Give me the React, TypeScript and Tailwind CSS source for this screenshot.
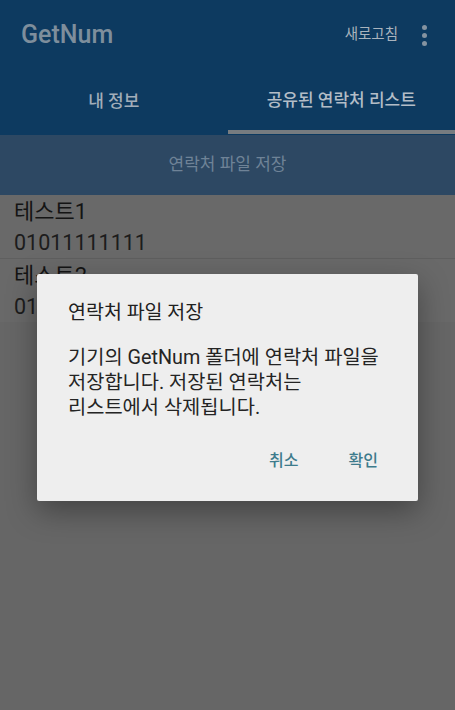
const font = { fontFamily: '"Roboto", "Noto Sans CJK KR", sans-serif' };

function Contact({ name, phone, divider }: { name: string; phone: string; divider?: boolean }) {
  return (
    <div className={`px-[14px] pt-[3px] pb-[1px] ${divider ? "border-b border-[#5f5f5f]" : ""}`}>
      <div className="text-[22px] leading-[28px] text-[#141414]">{name}</div>
      <div className="mt-[3px] text-[21.5px] leading-[28px] text-[#1c1c1c]">{phone}</div>
    </div>
  );
}

export default function App() {
  return (
    <div className="relative w-[455px] h-[710px] overflow-hidden bg-[#666666]" style={font}>
      {/* App bar */}
      <div className="bg-[#0d3a60]">
        <div className="flex items-center h-[70px] pl-[21px] pr-[28px]">
          <div className="text-[25px] font-medium text-[#7e8e9c] flex-1">GetNum</div>
          <div className="text-[14.5px] text-[#a9b3bd] mr-[24px]">새로고침</div>
          <div className="flex flex-col gap-[3px]">
            <span className="w-[5px] h-[5px] rounded-full bg-[#8593a0]" />
            <span className="w-[5px] h-[5px] rounded-full bg-[#8593a0]" />
            <span className="w-[5px] h-[5px] rounded-full bg-[#8593a0]" />
          </div>
        </div>
        <div className="flex h-[65px]">
          <div className="flex-1 flex items-center justify-center text-[17px] font-medium text-[#a1adb9] pb-[1px]">내 정보</div>
          <div className="flex-1 flex flex-col">
            <div className="flex-1 flex items-center justify-center text-[17px] font-medium text-[#b3bdc7] pt-[2px]">공유된 연락처 리스트</div>
            <div className="h-[4px] bg-[#777c80] mb-[1px]" />
          </div>
        </div>
      </div>

      {/* Save strip */}
      <div className="h-[60px] bg-[#2d4863] flex items-center justify-center text-[17px] text-[#6f8397]">
        연락처 파일 저장
      </div>

      {/* List */}
      <div className="bg-[#696969]">
        <Contact name="테스트1" phone="01011111111" divider />
        <Contact name="테스트2" phone="01022222222" />
      </div>

      {/* Dialog */}
      <div className="absolute left-[37px] top-[274px] w-[381px] h-[227px] bg-[#eeeeee] rounded-[2px] shadow-[0_10px_30px_rgba(0,0,0,0.35)] px-[31px] pt-[25px]">
        <div className="text-[19.5px] leading-[28px] text-[#202020]">연락처 파일 저장</div>
        <div className="mt-[18px] text-[19.8px] leading-[25px] text-[#242424]">
          기기의 GetNum 폴더에 연락처 파일을
          <br />
          저장합니다. 저장된 연락처는
          <br />
          리스트에서 삭제됩니다.
        </div>
        <div className="flex justify-end gap-[50px] mt-[29px] pr-[9px] text-[16px] font-medium text-[#3d7b8c]">
          <span>취소</span>
          <span>확인</span>
        </div>
      </div>
    </div>
  );
}
